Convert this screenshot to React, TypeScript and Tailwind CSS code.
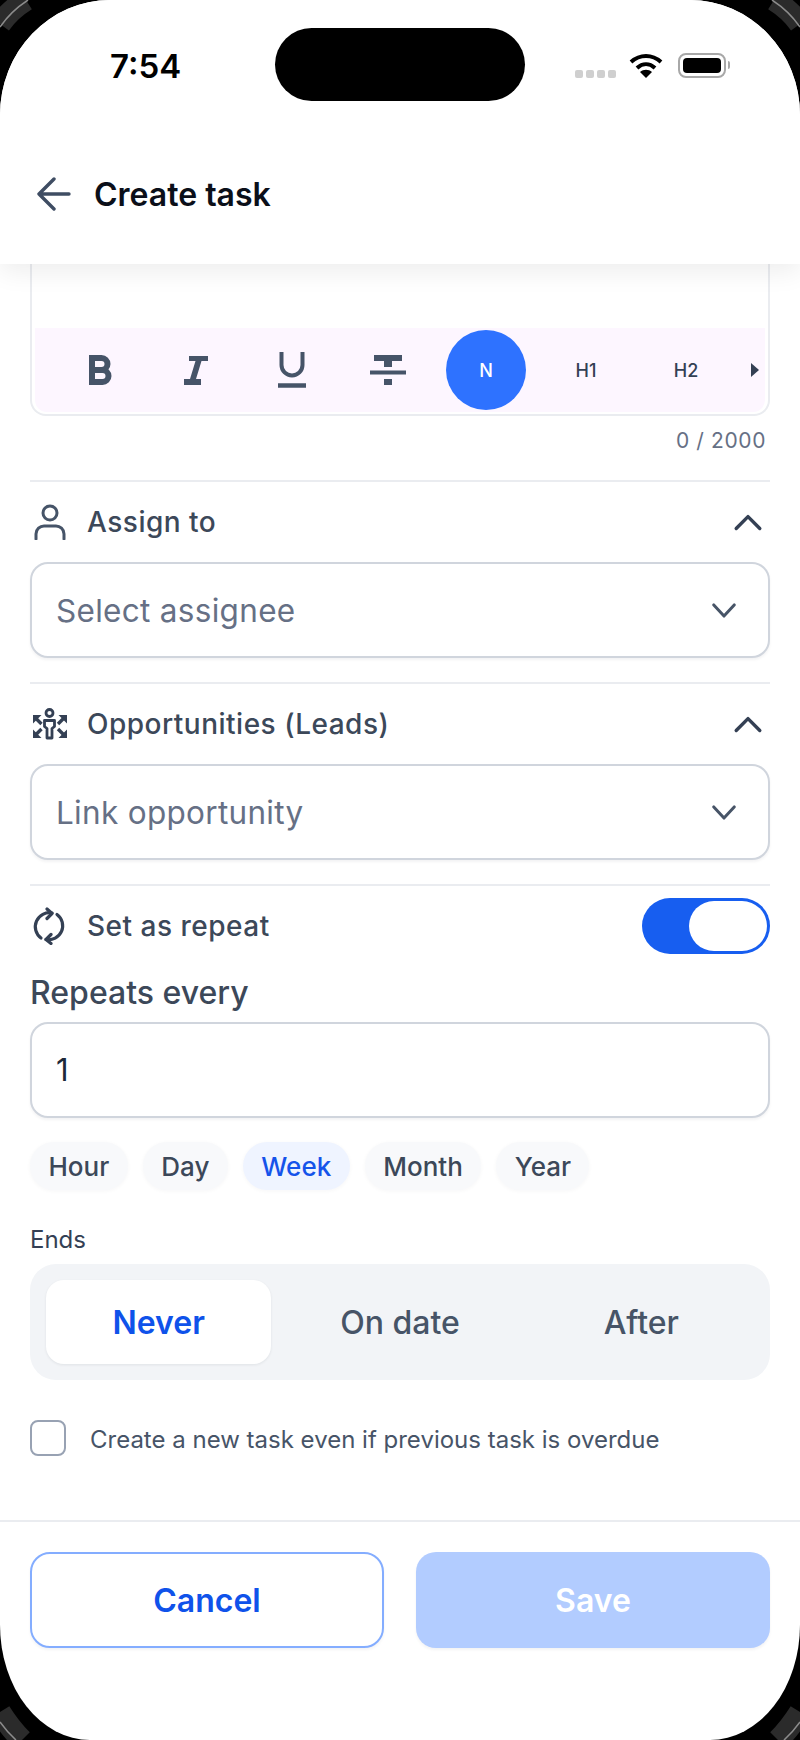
import React from 'react';

const SLATE = '#465468';

const Chevron: React.FC<{ up?: boolean; className?: string }> = ({ up, className }) => (
  <svg viewBox="0 0 28 16" className={className} fill="none" stroke="currentColor" strokeWidth={3.2} strokeLinecap="round" strokeLinejoin="round">
    {up ? <path d="M3 14 14 3l11 11" /> : <path d="M3 2l11 12L25 2" />}
  </svg>
);

const SelectBox: React.FC<{ placeholder: string }> = ({ placeholder }) => (
  <div className="h-[96px] rounded-[18px] border-2 border-[#d0d5dd] bg-white shadow-[0_2px_3px_rgba(16,24,40,0.05)] pl-[24px] pr-[31px] flex items-center justify-between">
    <span className="pt-[1px] text-[31.500px] text-[#667085] tracking-[0.3px]">{placeholder}</span>
    <Chevron className="w-[26px] h-[15px] text-[#475467]" />
  </div>
);

const Divider = () => <div className="h-[2px] bg-[#eaecf0]" />;

const SectionRow: React.FC<{ icon: React.ReactNode; label: string }> = ({ icon, label }) => (
  <div className="h-[80px] flex items-center justify-between pr-[7px]">
    <div className="flex items-center">
      <div className="w-[57px] flex items-center">{icon}</div>
      <span className="text-[28px] font-medium text-[#3c4859] tracking-[0.5px]">{label}</span>
    </div>
    <Chevron up className="w-[30px] h-[18px] text-[#344054]" />
  </div>
);

const PersonIcon = () => (
  <svg viewBox="0 0 32 36" className="w-[32px] h-[36px] ml-[4px]" fill="none" stroke="#465468" strokeWidth={3}>
    <circle cx="16" cy="9" r="7" />
    <path d="M2 35v-5c0-5 4-8 8-8h12c4 0 8 3 8 8v5" strokeLinecap="round" />
  </svg>
);

const OpportunityIcon = () => (
  <svg viewBox="0 0 36 32" className="w-[36px] h-[32px] ml-[2px]" fill="none" stroke="#344054">
    <circle cx="17.500" cy="5" r="3.500" strokeWidth={2.800} />
    <path d="M12.500 12.500h10v6l-2.500 2v9.500h-5v-9.500l-2.500-2z" strokeWidth={2.800} strokeLinejoin="round" />
    <g strokeWidth={3.400}>
      <path d="M9.500 16 4 10.500" />
      <path d="M26 16l5.500-5.500" />
      <path d="M9.500 21 4 26.500" />
      <path d="M26 21l5.500 5.500" />
    </g>
    <g fill="#344054" stroke="none">
      <path d="M1 7h8.500L1 15.500z" />
      <path d="M35 7h-8.500L35 15.500z" />
      <path d="M1 30h8.500L1 21.500z" />
      <path d="M35 30h-8.500L35 21.500z" />
    </g>
  </svg>
);

const RepeatIcon = () => (
  <svg viewBox="0 0 34 38" className="w-[34px] h-[38px] ml-[2px]" fill="none" stroke="#344054" strokeWidth={3.200} strokeLinecap="round" strokeLinejoin="round">
    <path d="M20 6A14 14 0 0 0 9 31" />
    <path d="M15 2l5 4.500-5 5" />
    <path d="M25 7.500A14 14 0 0 1 14 32.500" />
    <path d="M19 27.500l-5 5 5 4" />
  </svg>
);

const BoldIcon = () => (
  <svg viewBox="0 0 24 30" className="w-[24px] h-[30px] ml-[2px]" fill="none" stroke={SLATE} strokeWidth={6}>
    <path d="M3 3h9.500a5.500 5.500 0 0 1 0 12H3h10.500a6 6 0 0 1 0 12H3z" strokeLinejoin="miter" />
  </svg>
);

const ItalicIcon = () => (
  <svg viewBox="0 0 24 29" className="w-[24px] h-[29px]" fill={SLATE}>
    <path d="M5 0h19v5h-6.500L12 23h5v6H0v-6h6L11.500 5H5z" />
  </svg>
);

const UnderlineIcon = () => (
  <svg viewBox="0 0 28 36" className="w-[28px] h-[36px]" fill="none" stroke={SLATE}>
    <path d="M3.500 0v13a10.500 10.500 0 0 0 21 0V0" strokeWidth={4} />
    <path d="M0 33.500h28" strokeWidth={4.500} />
  </svg>
);

const StrikeIcon = () => (
  <svg viewBox="0 0 36 30" className="w-[36px] h-[30px]" fill={SLATE}>
    <rect x="4" y="0" width="28" height="6" />
    <rect x="14" y="6" width="8" height="6" />
    <rect x="0" y="15.500" width="36" height="4" />
    <rect x="14" y="24" width="8" height="6" />
  </svg>
);

// dark phone frame peeking out of the corners
const FrameCorners = () => (
  <svg viewBox="0 0 800 1740" className="absolute inset-0 w-[800px] h-[1740px]" fill="none">
    <g stroke="#2b2b2b" strokeWidth={22}>
      <path d="M0 24Q10 10 26 0" />
      <path d="M800 24Q790 10 774 0" />
      <path d="M0 1712Q10 1728 22 1740" />
      <path d="M800 1712Q790 1728 778 1740" />
    </g>
    <g stroke="#8c8c8c" strokeWidth={1.500}>
      <path d="M0 27Q11 11 28 0" />
      <path d="M800 27Q789 11 772 0" />
      <path d="M0 1722Q7 1732 16 1740" />
      <path d="M800 1722Q793 1732 784 1740" />
    </g>
  </svg>
);

const App: React.FC = () => {
  const units = ['Hour', 'Day', 'Week', 'Month', 'Year'];

  return (
    <div className="relative w-[800px] h-[1740px] bg-black overflow-hidden font-['Inter',sans-serif]">
      <FrameCorners />
      <div className="relative h-full bg-white overflow-hidden rounded-tl-[110px_115px] rounded-tr-[110px_115px] rounded-bl-[90px_115px] rounded-br-[90px_115px] flex flex-col">
        {/* Header */}
        <div className="relative z-10 h-[264px] shrink-0 bg-white shadow-[0_8px_24px_rgba(0,0,0,0.07)]">
          <div className="h-[130px] flex items-start">
            <div className="w-[275px] pt-[44px] pl-[110px] text-[33px] leading-[44px] font-semibold text-black">7:54</div>
            <div className="mt-[28px] w-[250px] h-[73px] rounded-full bg-black" />
            <div className="pt-[53px] pl-[50px] flex items-start">
              <div className="flex gap-[3px] mt-[17px]">
                {[0, 1, 2, 3].map(i => (
                  <div key={i} className="w-[8px] h-[8px] rounded-[2px] bg-[#cfcfcf]" />
                ))}
              </div>
              <svg viewBox="0 0 34 25" className="w-[34px] h-[25px] ml-[13px]" fill="none" stroke="#000" strokeWidth={4}>
                <path d="M2 9c9-8 21-8 30 0" />
                <path d="M8 15c5.500-5 12.500-5 18 0" />
                <path d="M17 25l-6-6c3.500-3 8.500-3 12 0z" fill="#000" stroke="none" />
              </svg>
              <div className="ml-[15px] w-[48px] h-[25px] rounded-[8px] border-2 border-[#a8a8a8] p-[3px]">
                <div className="w-full h-full rounded-[4px] bg-black" />
              </div>
              <div className="mt-[8px] ml-[2px] w-[2px] h-[8px] rounded-r-[2px] bg-[#a8a8a8]" />
            </div>
          </div>
          <div className="h-[128px] flex items-center pl-[37px]">
            <svg viewBox="0 0 34 34" className="w-[34px] h-[34px]" fill="none" stroke="#3f4d63" strokeWidth={3.400} strokeLinecap="round" strokeLinejoin="round">
              <path d="M32 17H2M17 2 2 17l15 15" />
            </svg>
            <span className="ml-[23px] pt-[2px] text-[32px] font-semibold text-[#0b0f19]">Create task</span>
          </div>
        </div>

        {/* Form */}
        <div className="flex-1 px-[30px]">
          <div className="h-[152px] border-x-2 border-b-2 border-[#eaecf0] rounded-b-[16px] px-[3px] pt-[64px]">
            <div className="h-[84px] bg-[#fdf6ff] flex items-center pl-[17px] rounded-b-[12px]">
              <div className="w-[96px] flex justify-center"><BoldIcon /></div>
              <div className="w-[96px] flex justify-center"><ItalicIcon /></div>
              <div className="w-[96px] flex justify-center"><UnderlineIcon /></div>
              <div className="w-[96px] flex justify-center"><StrikeIcon /></div>
              <div className="w-[100px] flex justify-center">
                <div className="w-[80px] h-[80px] rounded-full bg-[#2e72ff] text-white text-[18px] font-medium flex items-center justify-center">N</div>
              </div>
              <div className="w-[100px] text-center text-[18px] font-medium text-[#344054]">H1</div>
              <div className="w-[100px] text-center text-[18px] font-medium text-[#344054]">H2</div>
              <svg viewBox="0 0 8 14" className="w-[8px] h-[14px] ml-[15px]" fill="#344054">
                <path d="M0 0l8 7-8 7z" />
              </svg>
            </div>
          </div>
          <div className="h-[49px] flex items-center justify-end pr-[4px] text-[21px] text-[#667085] tracking-[0.6px]">0 / 2000</div>
          <div className="mt-[15px]"><Divider /></div>

          <SectionRow icon={<PersonIcon />} label="Assign to" />
          <SelectBox placeholder="Select assignee" />
          <div className="mt-[24px]"><Divider /></div>

          <SectionRow icon={<OpportunityIcon />} label="Opportunities (Leads)" />
          <SelectBox placeholder="Link opportunity" />
          <div className="mt-[24px]"><Divider /></div>

          <div className="pt-[12px] flex items-center justify-between">
            <div className="flex items-center">
              <div className="w-[57px] flex items-center"><RepeatIcon /></div>
              <span className="text-[28px] font-medium text-[#3c4859] tracking-[0.5px]">Set as repeat</span>
            </div>
            <div className="w-[128px] h-[56px] rounded-full bg-[#175ef0] p-[3px] flex justify-end">
              <div className="w-[78px] h-[50px] rounded-full bg-white" />
            </div>
          </div>
          <div className="h-[68px] pt-[10px] flex items-center text-[32px] font-medium text-[#3c4859]">Repeats every</div>
          <div className="h-[96px] rounded-[18px] border-2 border-[#d0d5dd] bg-white shadow-[0_2px_3px_rgba(16,24,40,0.05)] pl-[24px] pt-[1px] flex items-center text-[31px] text-[#1d2939]">1</div>

          <div className="mt-[24px] flex gap-[15px]">
            {units.map(u => (
              <div
                key={u}
                className={
                  u === 'Week'
                    ? 'h-[48px] px-[18.500px] rounded-full flex items-center text-[26px] font-medium bg-[#eff4ff] text-[#1553ea] shadow-[0_1px_4px_rgba(16,24,40,0.04)]'
                    : 'h-[48px] px-[18.500px] rounded-full flex items-center text-[26px] font-medium bg-[#f8f9fb] text-[#3c4859] shadow-[0_1px_4px_rgba(16,24,40,0.04)]'
                }
              >
                {u}
              </div>
            ))}
          </div>

          <div className="h-[74px] pt-[26px] flex items-center text-[24px] text-[#344054]">Ends</div>
          <div className="h-[116px] rounded-[26px] bg-[#f2f4f7] p-[16px] grid grid-cols-3 gap-[16px]">
            <div className="rounded-[18px] bg-white shadow-[0_1px_3px_rgba(16,24,40,0.08)] pt-[2px] flex items-center justify-center text-[32px] font-semibold text-[#0f52ea]">Never</div>
            <div className="pt-[2px] flex items-center justify-center text-[32px] font-medium text-[#475467]">On date</div>
            <div className="pt-[2px] flex items-center justify-center text-[32px] font-medium text-[#475467]">After</div>
          </div>

          <div className="mt-[40px] flex items-start">
            <div className="w-[36px] h-[36px] rounded-[8px] border-2 border-[#98a2b3] bg-white" />
            <span className="ml-[24px] h-[36px] pt-[4px] flex items-center text-[24px] text-[#475467]">Create a new task even if previous task is overdue</span>
          </div>
        </div>

        {/* Footer */}
        <div className="h-[220px] shrink-0 border-t-2 border-[#eaecf0] pt-[30px] px-[30px] flex gap-[32px]">
          <button className="w-[354px] h-[96px] pt-[2px] rounded-[20px] border-2 border-[#84adff] bg-white shadow-[0_2px_3px_rgba(16,24,40,0.05)] text-[32px] font-semibold text-[#0f52ea]">Cancel</button>
          <button className="w-[354px] h-[96px] pt-[2px] rounded-[20px] bg-[#b2ccff] shadow-[0_2px_3px_rgba(16,24,40,0.05)] text-[32px] font-semibold text-white">Save</button>
        </div>
      </div>
    </div>
  );
};

export default App;
